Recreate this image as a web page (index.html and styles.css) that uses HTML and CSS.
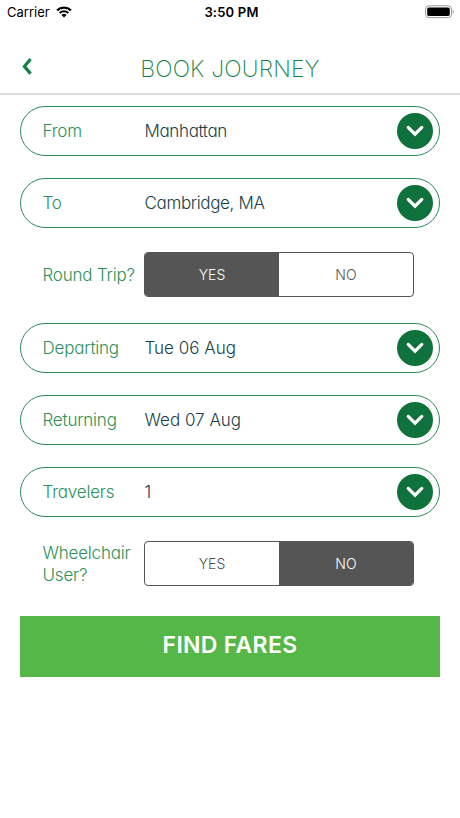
FILE: index.html
```html
<!DOCTYPE html>
<html lang="en">
<head>
    <meta charset="UTF-8">
    <title>Book Journey</title>
    <link rel="stylesheet" href="styles.css">
</head>
<body>

<!-- Chevron shared by all the picker rows -->
<svg class="defs">
    <symbol id="chevron" viewBox="0 0 36 36">
        <path d="M11.2 14.4l6.8 6.8 6.8-6.8" fill="none" stroke="#fff" stroke-width="3.2" stroke-linecap="round"/>
    </symbol>
</svg>

<div class="status-bar">
    <div class="carrier">
        <span class="carrier-name">Carrier</span>
        <svg class="wifi" width="16" height="12" viewBox="0 0 16 12">
            <path d="M1.1 4.4a10 10 0 0 1 13.8 0M3.7 7a6.2 6.2 0 0 1 8.6 0" fill="none" stroke="#000" stroke-width="2.2"/>
            <path d="M8 11.4L5.5 8.9a3.6 3.6 0 0 1 5 0z"/>
        </svg>
    </div>
    <div class="time">3:50 PM</div>
    <svg class="battery" width="29" height="14" viewBox="0 0 29 14">
        <rect x="0.6" y="0.8" width="26" height="11.8" rx="3.4" fill="none" stroke="#999"/>
        <rect x="2.2" y="2.5" width="22.6" height="8.4" rx="1.6"/>
        <path d="M27.7 4.6c1.3.6 1.3 3.6 0 4.2z" fill="#999"/>
    </svg>
</div>

<div class="header">
    <svg class="back" width="12" height="20" viewBox="0 0 12 20">
        <path d="M10.6 3L4.4 10.4l6.2 7.2" fill="none" stroke="#128247" stroke-width="3.2"/>
    </svg>
    <h1>BOOK JOURNEY</h1>
</div>

<div class="form">
    <div class="field">
        <span class="label">From</span>
        <span class="value">Manhattan</span>
        <svg class="arrow"><use href="#chevron"/></svg>
    </div>
    <div class="field">
        <span class="label">To</span>
        <span class="value">Cambridge, MA</span>
        <svg class="arrow"><use href="#chevron"/></svg>
    </div>
    <div class="field plain">
        <span class="label">Round Trip?</span>
        <div class="toggle">
            <span class="option selected">YES</span>
            <span class="option">NO</span>
        </div>
    </div>
    <div class="field">
        <span class="label">Departing</span>
        <span class="value date">Tue 06 Aug</span>
        <svg class="arrow"><use href="#chevron"/></svg>
    </div>
    <div class="field">
        <span class="label">Returning</span>
        <span class="value date">Wed 07 Aug</span>
        <svg class="arrow"><use href="#chevron"/></svg>
    </div>
    <div class="field">
        <span class="label">Travelers</span>
        <span class="value">1</span>
        <svg class="arrow"><use href="#chevron"/></svg>
    </div>
    <div class="field plain">
        <span class="label">Wheelchair User?</span>
        <div class="toggle">
            <span class="option">YES</span>
            <span class="option selected">NO</span>
        </div>
    </div>
</div>

<div class="find-fares">FIND FARES</div>

</body>
</html>
```
FILE: styles.css
```css
* {
    box-sizing: border-box;
}
body {
    margin: 0;
    min-height: 818px;
    background-color: #fff;
    font-family: Inter, "Liberation Sans", sans-serif;
    font-feature-settings: "cv11";
}
.defs {
    display: none;
}
/* Status bar */
.status-bar {
    display: grid;
    grid-template-columns: 1fr auto 1fr;
    align-items: center;
    height: 24px;
    padding: 0 6px 0 7px;
    color: #000;
    font-size: 13px;
    font-feature-settings: normal;
}
.carrier {
    display: flex;
    align-items: center;
    gap: 6px;
}
.time {
    font-weight: 600;
    letter-spacing: 0.2px;
    padding-left: 2px;
}
.battery {
    justify-self: end;
}
/* Title */
.header {
    display: flex;
    align-items: center;
    height: 71px;
    padding: 20px 20px 0;
    border-bottom: 2px solid #dcdcdc;
}
.back {
    margin-bottom: 5px;
}
h1 {
    flex: 1;
    margin: 0 12px 0 0;
    color: #128247;
    font-size: 23px;
    font-weight: 250;
    letter-spacing: 0.15px;
    text-align: center;
}
/* Booking fields */
.form {
    display: grid;
    row-gap: 22.2px;
    padding: 11px 20px 0;
}
.field {
    display: grid;
    grid-template-columns: 102px 1fr 36px;
    align-items: center;
    height: 50px;
    padding: 0 6px 0 21.5px;
    border: 1.5px solid #2b8b57;
    border-radius: 25px;
    font-size: 17px;
    font-weight: 300;
    line-height: 22px;
}
.plain {
    grid-template-columns: 101.5px 270px;
    border-color: transparent;
}
.label {
    color: #2b9159;
    letter-spacing: -0.2px;
}
.value {
    color: #173f4b;
    letter-spacing: -0.35px;
}
.date {
    letter-spacing: 0;
}
.arrow {
    width: 36px;
    height: 36px;
    border-radius: 50%;
    background-color: #0f713b;
}
.toggle {
    display: grid;
    grid-template-columns: 1fr 1fr;
    height: 45px;
    margin-top: -1px;
    border: 1px solid #555;
    border-radius: 4px;
    font-size: 14px;
    font-weight: 350;
    overflow: hidden;
}
.option {
    display: flex;
    align-items: center;
    justify-content: center;
    color: #555;
}
.selected {
    background-color: #555;
    color: #fff;
}
/* Submit */
.find-fares {
    display: flex;
    align-items: center;
    justify-content: center;
    height: 61px;
    margin: 26.4px 20px 0;
    padding-bottom: 2px;
    background-color: #55b748;
    color: #fff;
    font-size: 23px;
    font-weight: 600;
    letter-spacing: 0.3px;
}
```
